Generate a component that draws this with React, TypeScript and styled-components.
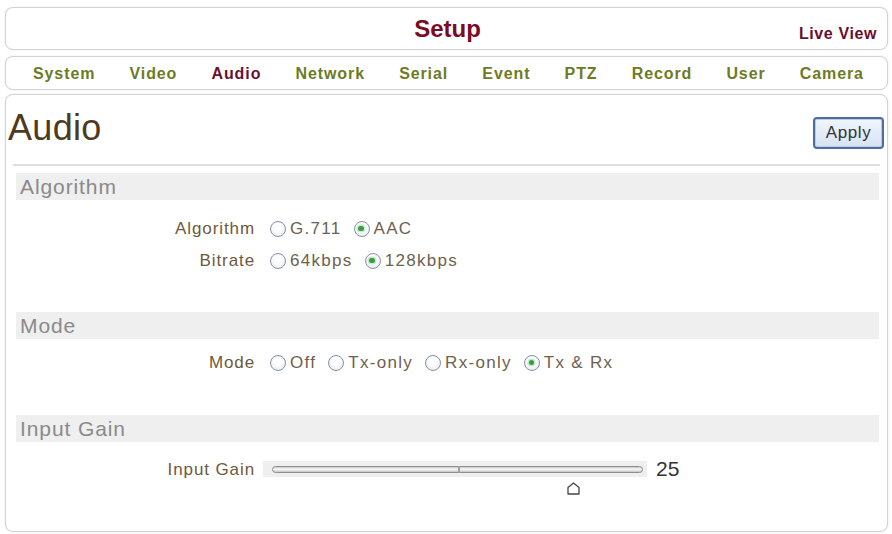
import React from 'react';
import styled, { createGlobalStyle } from 'styled-components';

const Global = createGlobalStyle`
  html, body { margin: 0; padding: 0; background: #fff; }
  body { font-family: "Liberation Sans", Arial, sans-serif; }
`;

const Page = styled.div`
  width: 892px;
  height: 534px;
  box-sizing: border-box;
  padding: 7px 4px 2px 5px;
  display: flex;
  flex-direction: column;
`;

const Box = styled.div`
  border: 1px solid #d3d3d3;
  border-radius: 8px;
  background: #fff;
  box-shadow: 0 0 2px rgba(0, 0, 0, 0.12);
  box-sizing: border-box;
`;

const Header = styled(Box)`
  height: 43px;
  display: grid;
  grid-template-columns: 1fr auto 1fr;
  align-items: center;
  padding: 0 10px;
`;

const SetupTitle = styled.div`
  font-size: 24px;
  font-weight: bold;
  color: #7b0b1f;
  padding-top: 1px;
  padding-left: 2px;
`;

const LiveView = styled.a`
  justify-self: end;
  align-self: end;
  padding-bottom: 6px;
  font-size: 16px;
  font-weight: bold;
  letter-spacing: 0.6px;
  color: #6a0e2e;
  text-decoration: none;
`;

const TabBar = styled(Box)`
  margin-top: 6px;
  height: 34px;
  display: flex;
  justify-content: space-between;
  align-items: center;
  padding: 1px 23px 0 27px;
`;

const Tab = styled.span<{ $active?: boolean }>`
  font-size: 16px;
  font-weight: bold;
  letter-spacing: 0.9px;
  color: ${(p) => (p.$active ? '#6b1030' : '#6e7b24')};
`;

const Main = styled(Box)`
  margin-top: 4px;
  flex: 1;
  padding: 0 3px 0 2px;
`;

const TitleRow = styled.div`
  height: 69px;
  display: flex;
  align-items: center;
  justify-content: space-between;
`;

const PageTitle = styled.h1`
  margin: 0 0 4px 0;
  font-size: 36px;
  font-weight: normal;
  letter-spacing: 0.3px;
  color: #4e3b1d;
`;

const ApplyButton = styled.button`
  width: 71px;
  height: 32px;
  margin-top: 6px;
  border: 2px solid #4f6e9f;
  border-radius: 4px;
  background: linear-gradient(#f1f6fd, #d6e2f3);
  box-shadow: inset 0 0 0 1px #b9cbe6;
  font-family: "Liberation Sans", Arial, sans-serif;
  font-size: 17px;
  letter-spacing: 0.6px;
  color: #333;
  padding: 0;
`;

const Separator = styled.div`
  height: 2px;
  background: #dedede;
  margin: 0 4px 0 5px;
`;

const Section = styled.section<{ $gap: number; $padTop: number }>`
  margin-top: ${(p) => p.$gap}px;
  & > div:nth-child(2) {
    margin-top: ${(p) => p.$padTop}px;
  }
`;

const SectionBar = styled.div`
  height: 27px;
  line-height: 28px;
  margin: 0 5px 0 8px;
  padding-left: 4px;
  background: #efefef;
  font-size: 21px;
  letter-spacing: 0.9px;
  color: #8a8a8a;
`;

const Fields = styled.div``;

const FieldRow = styled.div`
  display: grid;
  grid-template-columns: 247px 1fr;
  column-gap: 15px;
  height: 32px;
  align-items: center;
`;

const FieldLabel = styled.div`
  text-align: right;
  font-size: 17px;
  letter-spacing: 0.9px;
  color: #6c5a3c;
`;

const Options = styled.div`
  display: flex;
  align-items: center;
  gap: 12px;
`;

const Option = styled.label`
  display: inline-flex;
  align-items: center;
  gap: 4px;
  font-size: 17px;
  letter-spacing: 1.3px;
  color: #6d6150;
`;

const Radio = styled.span<{ $checked?: boolean }>`
  position: relative;
  width: 16px;
  height: 16px;
  box-sizing: border-box;
  border-radius: 50%;
  border: 1.5px solid #8494a8;
  background: radial-gradient(circle at 50% 40%, #ffffff 30%, #e1e5ea 100%);
  flex: none;
  &::after {
    content: '';
    display: ${(p) => (p.$checked ? 'block' : 'none')};
    position: absolute;
    left: 3.75px;
    top: 3.75px;
    width: 5.5px;
    height: 5.5px;
    border-radius: 50%;
    background: #3b9c48;
    box-shadow: 0 0 0 1.5px #c6eacb;
  }
`;

const SliderWrap = styled.div`
  align-self: start;
  margin-top: 3px;
  display: flex;
  align-items: center;
  gap: 9px;
  margin-left: -7px;
`;

const SliderBox = styled.div`
  position: relative;
  width: 384px;
  height: 16px;
  box-sizing: border-box;
  padding: 0 4px 0 9px;
  background: #efefef;
  display: flex;
  align-items: center;
`;

const Track = styled.div`
  position: relative;
  flex: 1;
  height: 7px;
  box-sizing: border-box;
  border: 1px solid #8e8e8e;
  border-radius: 4px;
  background: linear-gradient(#c9c9c9, #fafafa 45%, #c4c4c4);
  &::after {
    content: '';
    position: absolute;
    left: 50%;
    top: -1px;
    width: 2px;
    height: 7px;
    background: #a0a0a0;
  }
`;

const Thumb = styled.svg`
  position: absolute;
  top: 20px;
`;

const SliderValue = styled.span`
  font-size: 21px;
  color: #333;
`;

const algorithmOptions = [
  { label: 'G.711', checked: false },
  { label: 'AAC', checked: true },
];
const bitrateOptions = [
  { label: '64kbps', checked: false },
  { label: '128kbps', checked: true },
];
const modeOptions = [
  { label: 'Off', checked: false },
  { label: 'Tx-only', checked: false },
  { label: 'Rx-only', checked: false },
  { label: 'Tx & Rx', checked: true },
];

const tabs = ['System', 'Video', 'Audio', 'Network', 'Serial', 'Event', 'PTZ', 'Record', 'User', 'Camera'];

function RadioGroup({ options }: { options: { label: string; checked: boolean }[] }) {
  return (
    <Options>
      {options.map((o) => (
        <Option key={o.label}>
          <Radio $checked={o.checked} />
          {o.label}
        </Option>
      ))}
    </Options>
  );
}

export default function App() {
  return (
    <>
      <Global />
      <Page>
        <Header>
          <span />
          <SetupTitle>Setup</SetupTitle>
          <LiveView>Live View</LiveView>
        </Header>
        <TabBar>
          {tabs.map((t) => (
            <Tab key={t} $active={t === 'Audio'}>
              {t}
            </Tab>
          ))}
        </TabBar>
        <Main>
          <TitleRow>
            <PageTitle>Audio</PageTitle>
            <ApplyButton>Apply</ApplyButton>
          </TitleRow>
          <Separator />
          <Section $gap={7} $padTop={13}>
            <SectionBar>Algorithm</SectionBar>
            <Fields>
              <FieldRow>
                <FieldLabel>Algorithm</FieldLabel>
                <RadioGroup options={algorithmOptions} />
              </FieldRow>
              <FieldRow>
                <FieldLabel>Bitrate</FieldLabel>
                <RadioGroup options={bitrateOptions} />
              </FieldRow>
            </Fields>
          </Section>
          <Section $gap={35} $padTop={8}>
            <SectionBar>Mode</SectionBar>
            <Fields>
              <FieldRow>
                <FieldLabel>Mode</FieldLabel>
                <RadioGroup options={modeOptions} />
              </FieldRow>
            </Fields>
          </Section>
          <Section $gap={36} $padTop={12}>
            <SectionBar>Input Gain</SectionBar>
            <Fields>
              <FieldRow>
                <FieldLabel>Input Gain</FieldLabel>
                <SliderWrap>
                  <SliderBox>
                    <Track />
                    <Thumb style={{ left: 303 }} width="15" height="15" viewBox="0 0 15 15">
                      <path d="M7.5 2 L13 6.5 V13 H2 V6.5 Z" fill="#fff" stroke="#444" strokeWidth="1.3" strokeLinejoin="round" />
                    </Thumb>
                  </SliderBox>
                  <SliderValue>25</SliderValue>
                </SliderWrap>
              </FieldRow>
            </Fields>
          </Section>
        </Main>
      </Page>
    </>
  );
}
